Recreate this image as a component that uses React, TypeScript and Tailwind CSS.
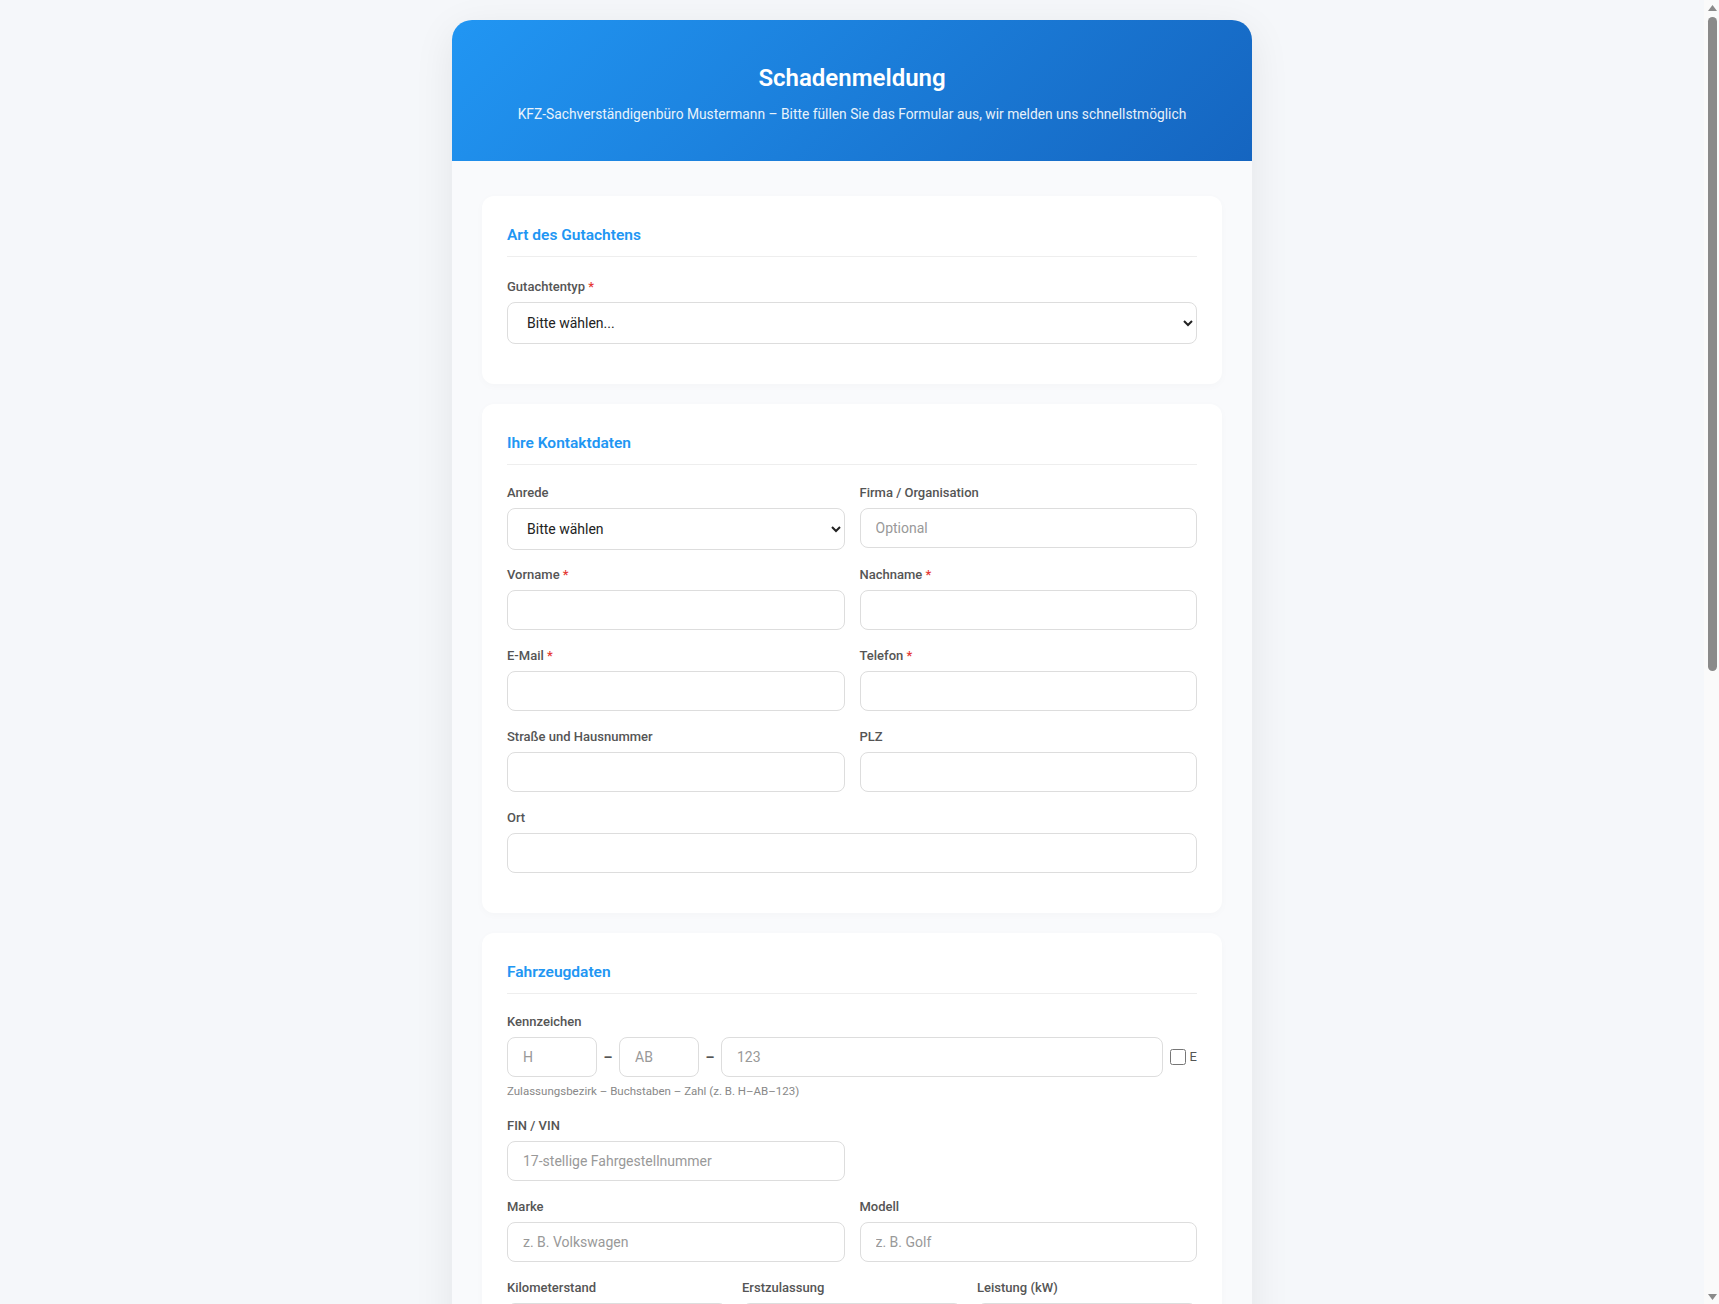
import { useState } from "react";
import { Upload } from "lucide-react";

const inputCls =
  "block w-full h-[40px] px-[15px] rounded-[8px] border border-[#ddd] bg-white text-[14px] text-[#333] placeholder:text-[#999] outline-none focus:border-[#2196F3]";
const selectCls =
  "block w-full h-[42px] pl-[15px] pr-[6px] rounded-[8px] border border-[#ddd] bg-white text-[14px] text-[#222] outline-none focus:border-[#2196F3]";

function Section({ title, children }: { title: string; children: React.ReactNode }) {
  return (
    <section className="bg-white rounded-[12px] px-[25px] pt-[26px] pb-[24px] shadow-[0_2px_8px_rgba(0,0,0,0.025)]">
      <h2 className="text-[15.5px] leading-[26px] font-semibold text-[#2196F3] pb-[8px] border-b border-[#eee] mb-[18px]">
        {title}
      </h2>
      {children}
    </section>
  );
}

function Field({
  label,
  required,
  select,
  children,
}: {
  label: string;
  required?: boolean;
  select?: boolean;
  children: React.ReactNode;
}) {
  return (
    <div className={select ? "mb-[15px]" : "mb-[16px]"}>
      <label className="block mb-[5px] text-[13px] leading-[20px] font-medium text-[#555]">
        {label}
        {required && <span className="text-[#e53935]"> *</span>}
      </label>
      {children}
    </div>
  );
}

// the browser's own scrollbar, as it shows in the screenshot
function Scrollbar() {
  return (
    <div aria-hidden className="w-[15px] shrink-0 bg-[#fafafa] flex flex-col items-center">
      <svg width="9" height="6" viewBox="0 0 9 6" className="mt-[5px] ml-[1px]">
        <path d="M4.5 0 L9 6 L0 6 Z" fill="#8a8a8a" />
      </svg>
      <div className="mt-[6px] ml-[1px] h-[654px] w-[9px] rounded-full bg-[#8a8a8a]" />
      <div className="flex-1" />
      <svg width="9" height="6" viewBox="0 0 9 6" className="mb-[4px] ml-[1px]">
        <path d="M0 0 L9 0 L4.5 6 Z" fill="#8a8a8a" />
      </svg>
    </div>
  );
}

export default function App() {
  const [eKennzeichen, setEKennzeichen] = useState(false);

  return (
    <div className="flex h-screen bg-[#f5f7fa] font-[Roboto,'Liberation_Sans',sans-serif] text-[#333]">
      <div className="flex-1 min-w-0 overflow-y-auto p-[20px]">
        <div className="mx-auto max-w-[800px] rounded-[20px] overflow-hidden bg-[#f9fafc] shadow-[0_10px_40px_rgba(0,0,0,0.08)]">
          {/* Header */}
          <header className="px-[30px] pt-[40px] pb-[36px] text-center text-white bg-[linear-gradient(135deg,#2196F3,#1565C0)]">
            <h1 className="text-[24px] leading-[36px] font-semibold mb-[8px]">Schadenmeldung</h1>
            <p className="text-[13.8px] leading-[21px] opacity-90">
              KFZ-Sachverständigenbüro Mustermann – Bitte füllen Sie das Formular aus, wir melden uns schnellstmöglich
            </p>
          </header>

          <form className="px-[30px] pt-[35px] pb-[30px] flex flex-col gap-[20px]">
            {/* Art des Gutachtens */}
            <Section title="Art des Gutachtens">
              <div className="pt-[2px] pb-[1px]">
                <Field label="Gutachtentyp" required select>
                  <select className={selectCls} defaultValue="">
                    <option value="">Bitte wählen...</option>
                    <option>Haftpflichtschaden</option>
                    <option>Kaskoschaden</option>
                    <option>Wertgutachten</option>
                    <option>Kurzgutachten</option>
                  </select>
                </Field>
              </div>
            </Section>

            {/* Kontaktdaten */}
            <Section title="Ihre Kontaktdaten">
              <div className="grid grid-cols-2 gap-x-[15px]">
                <Field label="Anrede" select>
                  <select className={selectCls} defaultValue="">
                    <option value="">Bitte wählen</option>
                    <option>Herr</option>
                    <option>Frau</option>
                    <option>Divers</option>
                  </select>
                </Field>
                <Field label="Firma / Organisation">
                  <input className={inputCls} placeholder="Optional" />
                </Field>
                <Field label="Vorname" required>
                  <input className={inputCls} />
                </Field>
                <Field label="Nachname" required>
                  <input className={inputCls} />
                </Field>
                <Field label="E-Mail" required>
                  <input type="email" className={inputCls} />
                </Field>
                <Field label="Telefon" required>
                  <input type="tel" className={inputCls} />
                </Field>
                <Field label="Straße und Hausnummer">
                  <input className={inputCls} />
                </Field>
                <Field label="PLZ">
                  <input className={inputCls} />
                </Field>
              </div>
              <Field label="Ort">
                <input className={inputCls} />
              </Field>
            </Section>

            {/* Fahrzeugdaten */}
            <Section title="Fahrzeugdaten">
              <div className="mb-[17px]">
                <label className="block mb-[5px] text-[13px] leading-[20px] font-medium text-[#555]">Kennzeichen</label>
                <div className="flex items-center">
                  <input className={inputCls + " !w-[90px] shrink-0"} placeholder="H" />
                  <span className="w-[22px] shrink-0 text-center text-[14px] font-bold text-[#555]">–</span>
                  <input className={inputCls + " !w-[80px] shrink-0"} placeholder="AB" />
                  <span className="w-[22px] shrink-0 text-center text-[14px] font-bold text-[#555]">–</span>
                  <input className={inputCls + " flex-1 min-w-0"} placeholder="123" />
                  <label className="ml-[7px] flex items-center gap-[4px] text-[13px] text-[#555] shrink-0">
                    <input
                      type="checkbox"
                      className="m-0 w-[16px] h-[16px]"
                      checked={eKennzeichen}
                      onChange={(e) => setEKennzeichen(e.target.checked)}
                    />
                    E
                  </label>
                </div>
                <p className="mt-[6px] text-[11.5px] leading-[16px] text-[#888]">
                  Zulassungsbezirk – Buchstaben – Zahl (z. B. H–AB–123)
                </p>
              </div>

              <div className="grid grid-cols-2 gap-x-[15px]">
                <Field label="FIN / VIN">
                  <input className={inputCls} placeholder="17-stellige Fahrgestellnummer" />
                </Field>
                <div />
                <Field label="Marke">
                  <input className={inputCls} placeholder="z. B. Volkswagen" />
                </Field>
                <Field label="Modell">
                  <input className={inputCls} placeholder="z. B. Golf" />
                </Field>
              </div>
              <div className="grid grid-cols-3 gap-x-[15px]">
                <Field label="Kilometerstand">
                  <input className={inputCls} placeholder="z. B. 85000" />
                </Field>
                <Field label="Erstzulassung">
                  <input className={inputCls} placeholder="MM/JJJJ" />
                </Field>
                <Field label="Leistung (kW)">
                  <input className={inputCls} placeholder="z. B. 110" />
                </Field>
              </div>
            </Section>

            {/* Schadensdaten */}
            <Section title="Angaben zum Schaden">
              <div className="grid grid-cols-2 gap-x-[15px]">
                <Field label="Schadendatum" required>
                  <input className={inputCls} placeholder="TT.MM.JJJJ" />
                </Field>
                <Field label="Uhrzeit">
                  <input className={inputCls} placeholder="HH:MM" />
                </Field>
              </div>
              <Field label="Schadenort">
                <input className={inputCls} placeholder="Straße, Ort" />
              </Field>
              <Field label="Schadenhergang" required>
                <textarea
                  rows={5}
                  className="block w-full px-[15px] py-[10px] rounded-[8px] border border-[#ddd] bg-white text-[14px] placeholder:text-[#999] outline-none resize-y"
                  placeholder="Bitte beschreiben Sie kurz, wie es zum Schaden kam"
                />
              </Field>
            </Section>

            {/* Versicherung */}
            <Section title="Versicherung">
              <div className="grid grid-cols-2 gap-x-[15px]">
                <Field label="Eigene Versicherung">
                  <input className={inputCls} placeholder="z. B. HUK-COBURG" />
                </Field>
                <Field label="Versicherungsnummer">
                  <input className={inputCls} />
                </Field>
                <Field label="Versicherung des Unfallgegners">
                  <input className={inputCls} placeholder="Falls bekannt" />
                </Field>
                <Field label="Schadennummer">
                  <input className={inputCls} placeholder="Falls bekannt" />
                </Field>
              </div>
            </Section>

            {/* Fotos */}
            <Section title="Fotos & Dokumente">
              <div className="mb-[16px] flex flex-col items-center rounded-[10px] border-2 border-dashed border-[#cfd8e3] bg-[#fafcff] py-[28px] text-center">
                <Upload size={28} className="text-[#2196F3] mb-[8px]" />
                <p className="text-[14px] text-[#555]">Dateien hierher ziehen oder klicken zum Auswählen</p>
                <p className="mt-[4px] text-[12px] text-[#888]">JPG, PNG, PDF – max. 10 MB pro Datei</p>
              </div>
            </Section>

            <label className="flex items-start gap-[10px] text-[13px] leading-[20px] text-[#555]">
              <input type="checkbox" className="mt-[3px] w-[14px] h-[14px]" />
              <span>
                Ich stimme der Verarbeitung meiner Daten gemäß der Datenschutzerklärung zu.
                <span className="text-[#e53935]"> *</span>
              </span>
            </label>

            <button
              type="button"
              className="h-[50px] w-full rounded-[10px] text-[16px] font-semibold text-white bg-[linear-gradient(135deg,#2196F3,#1565C0)]"
            >
              Schadenmeldung absenden
            </button>
          </form>
        </div>
      </div>
      <Scrollbar />
    </div>
  );
}
